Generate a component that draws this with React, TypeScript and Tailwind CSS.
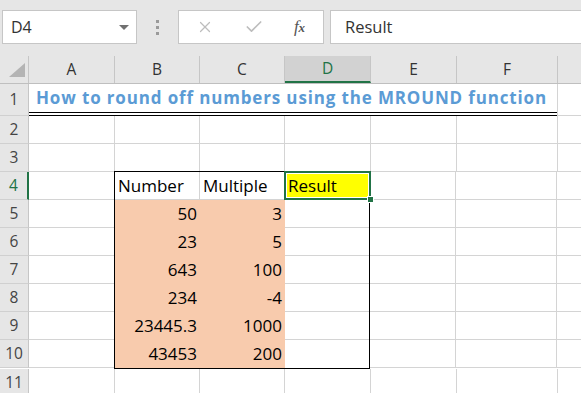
import { X, Check } from "lucide-react";

// 列幅 (行番号, A..F, 余り)
const cols = [
  { key: "A", w: "w-[86px]" },
  { key: "B", w: "w-[85px]" },
  { key: "C", w: "w-[85px]" },
  { key: "D", w: "w-[86px]" },
  { key: "E", w: "w-[86px]" },
  { key: "F", w: "w-[101px]" },
];

const data = [
  ["50", "3"],
  ["23", "5"],
  ["643", "100"],
  ["234", "-4"],
  ["23445.3", "1000"],
  ["43453", "200"],
];

const font = "font-['Open_Sans',sans-serif]";

const RowHead = ({ n, active = false, h = "h-[28px]" }: { n: number; active?: boolean; h?: string }) => (
  <div
    className={`w-[29px] shrink-0 ${h} flex items-center justify-center bg-[#e6e6e6] border-b border-[#d0d0d0] text-[15.5px] ${
      active ? "text-[#217346] border-r-2 border-r-[#217346]" : "text-[#444] border-r border-r-[#c6c6c6]"
    }`}
  >
    {n}
  </div>
);

const Cell = ({ w, className = "" , children }: { w: string; className?: string; children?: React.ReactNode }) => (
  <div className={`${w} shrink-0 h-full border-r border-b border-[#d4d4d4] ${className}`}>{children}</div>
);

const App = () => {
  return (
    <div className={`w-[581px] h-[393px] overflow-hidden bg-white text-black ${font}`}>
      {/* 上部ツールバー */}
      <div className="h-[56px] bg-[#e6e6e6] flex items-start pt-[10px] pl-[2px]">
        <div className="w-[135px] h-[34px] bg-white border border-[#c6c6c6] flex items-center justify-between pl-[8px] pr-[7px] text-[16px] text-[#333]">
          <span>D4</span>
          <span className="w-0 h-0 border-l-[5px] border-r-[5px] border-t-[5px] border-l-transparent border-r-transparent border-t-[#707070]" />
        </div>
        <div className="w-[41px] h-[34px] flex flex-col items-center justify-center gap-[3px]">
          <span className="w-[3px] h-[3px] bg-[#9a9a9a]" />
          <span className="w-[3px] h-[3px] bg-[#9a9a9a]" />
          <span className="w-[3px] h-[3px] bg-[#9a9a9a]" />
        </div>
        <div className="w-[146px] h-[34px] bg-white border border-[#c6c6c6] flex items-center">
          <div className="w-[52px] flex justify-center"><X size={18} strokeWidth={1.6} color="#bdbdbd" /></div>
          <div className="w-[45px] flex justify-center"><Check size={20} strokeWidth={2} color="#bdbdbd" /></div>
          <div className="w-[47px] text-center font-['Liberation_Serif',serif] italic text-[17px] text-[#555]">
            f<span className="text-[13px] font-bold">x</span>
          </div>
        </div>
        <div className="ml-[6px] flex-1 h-[34px] bg-white border border-[#c6c6c6] border-r-0 flex items-center pl-[14px] text-[16.5px] text-[#333]">
          Result
        </div>
      </div>

      {/* 列見出し */}
      <div className="h-[28px] flex bg-[#e6e6e6] border-b border-[#bfbfbf]">
        <div className="w-[29px] shrink-0 border-r border-[#c6c6c6] relative">
          <span className="absolute right-[3px] bottom-[6px] w-0 h-0 [border-bottom:14px_solid_#b4b4b4] [border-left:16px_solid_transparent]" />
        </div>
        {cols.map((c) => (
          <div
            key={c.key}
            className={`${c.w} shrink-0 flex items-center justify-center text-[15.5px] border-r border-[#c6c6c6] ${
              c.key === "D" ? "bg-[#d2d2d2] text-[#217346] border-b-2 border-b-[#217346]" : "text-[#333]"
            }`}
          >
            {c.key}
          </div>
        ))}
        <div className="flex-1" />
      </div>

      {/* 1行目: タイトル */}
      <div className="flex h-[32px]">
        <RowHead n={1} h="h-[32px]" />
        <div className="w-[529px] shrink-0 h-full border-r border-[#d4d4d4] flex flex-col">
          <div className="h-[28px] flex items-center pl-[7px] text-[17px] tracking-[0.85px] font-bold text-[#5b9bd5] whitespace-nowrap">
            How to round off numbers using the MROUND function
          </div>
          <div className="h-[4px] border-t border-b border-black" />
        </div>
        <div className="flex-1 border-b border-[#d4d4d4]" />
      </div>

      {/* 2,3行目 */}
      {[2, 3].map((n) => (
        <div key={n} className="flex h-[28px]">
          <RowHead n={n} />
          {cols.map((c) => (
            <Cell key={c.key} w={c.w} />
          ))}
          <div className="flex-1 border-b border-[#d4d4d4]" />
        </div>
      ))}

      {/* 4〜10行目: 表 */}
      <div className="flex">
        <div className="flex flex-col">
          {[4, 5, 6, 7, 8, 9, 10].map((n) => (
            <RowHead key={n} n={n} active={n === 4} />
          ))}
        </div>
        <div className="w-[86px] shrink-0 flex flex-col">
          {[4, 5, 6, 7, 8, 9, 10].map((n) => (
            <div key={n} className="h-[28px] border-r border-b border-[#d4d4d4]" />
          ))}
        </div>
        {/* B4:D10 の枠 */}
        <div className="w-[256px] shrink-0 border border-black -ml-[1px] -mt-[1px] relative">
          <div className="flex h-[28px] text-[17px]">
            <div className="w-[85px] shrink-0 pl-[3px] flex items-center border-r border-b border-[#d4d4d4]">Number</div>
            <div className="w-[85px] shrink-0 pl-[3px] flex items-center border-r border-b border-[#d4d4d4]">Multiple</div>
            <div className="flex-1 border-b border-[#d4d4d4]" />
          </div>
          {data.map(([a, b], i) => (
            <div key={i} className="flex h-[28px] text-[17px]">
              <div className={`w-[85px] shrink-0 bg-[#f8cbad] pr-[3px] flex items-center justify-end ${i === 5 ? "" : "border-b border-[#f8cbad]"}`}>{a}</div>
              <div className={`w-[85px] shrink-0 bg-[#f8cbad] pr-[3px] flex items-center justify-end ${i === 5 ? "" : "border-b border-[#f8cbad]"}`}>{b}</div>
              <div className={`flex-1 ${i === 5 ? "" : "border-b border-[#d4d4d4]"}`} />
            </div>
          ))}
          {/* 選択セル D4 */}
          <div className="absolute left-[169px] -top-[1px] w-[87px] h-[29px] border-2 border-[#217346] p-[1px]">
            <div className="w-full h-full bg-[#ffff00] flex items-center pl-[1px] text-[17px]">Result</div>
            <span className="absolute -right-[5px] -bottom-[5px] w-[7px] h-[7px] bg-[#217346] border border-white" />
          </div>
        </div>
        <div className="flex flex-col">
          {[4, 5, 6, 7, 8, 9, 10].map((n) => (
            <div key={n} className="flex h-[28px]">
              <Cell w="w-[86px]" />
              <Cell w="w-[101px]" />
              <div className="w-[40px] border-b border-[#d4d4d4]" />
            </div>
          ))}
        </div>
      </div>

      {/* 11行目 */}
      <div className="flex h-[28px]">
        <RowHead n={11} />
        {cols.map((c) => (
          <Cell key={c.key} w={c.w} />
        ))}
        <div className="flex-1 border-b border-[#d4d4d4]" />
      </div>
    </div>
  );
};

export default App;
